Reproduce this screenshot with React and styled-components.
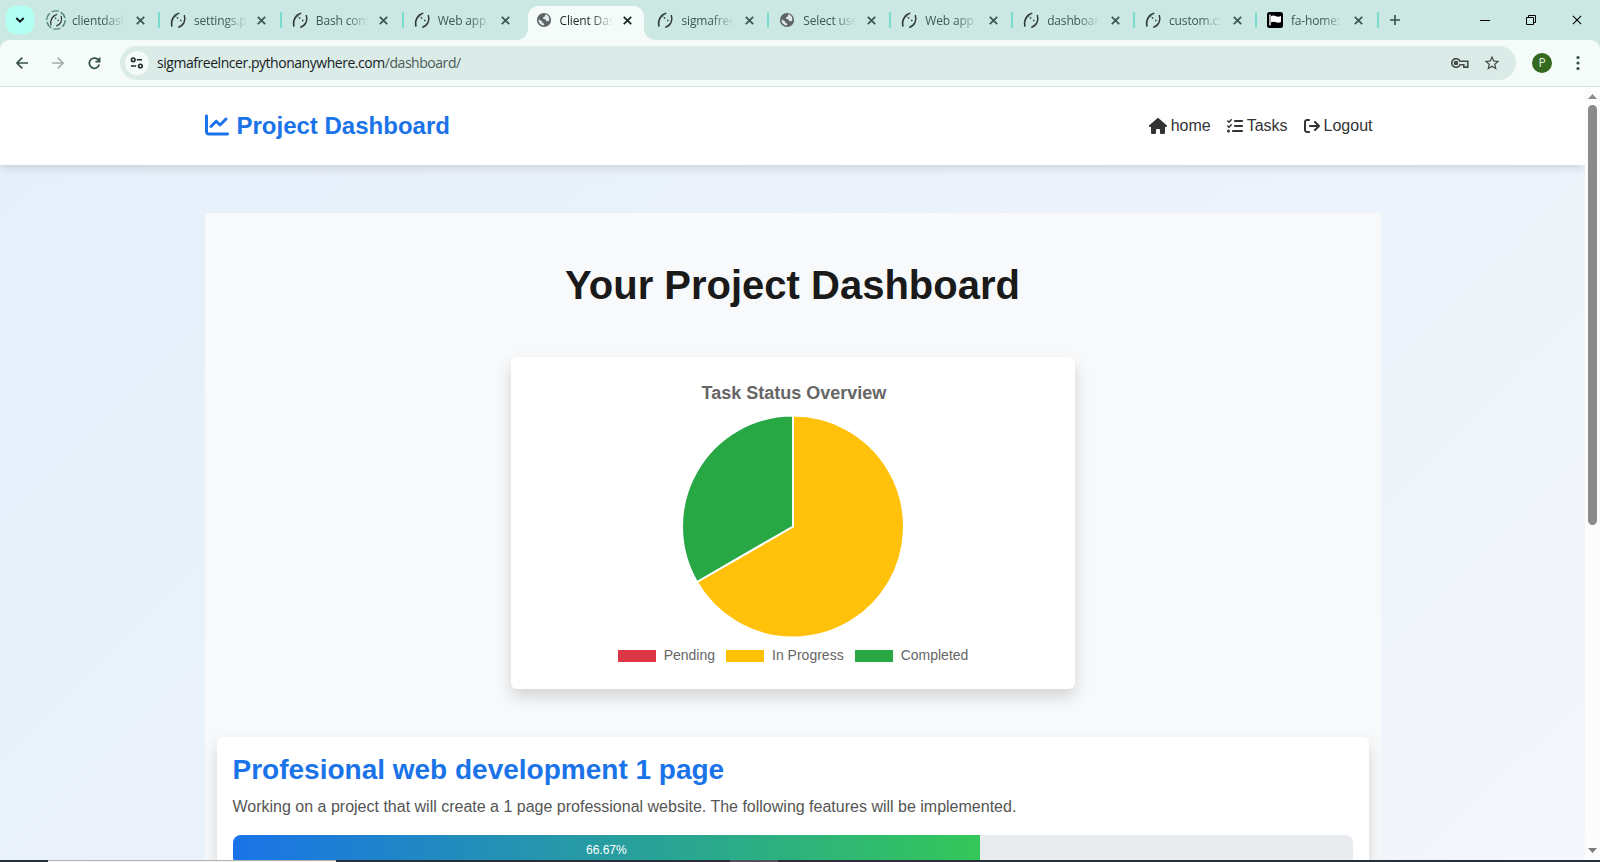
import React from "react";
import styled, { createGlobalStyle, css } from "styled-components";
import { MdOutlineStarBorder } from "react-icons/md";
import { FaChartLine, FaHouse, FaListCheck, FaArrowRightFromBracket } from "react-icons/fa6";

const GlobalStyle = createGlobalStyle`
  * { box-sizing: border-box; }
  body { margin: 0; overflow: hidden; font-family: "Liberation Sans", Arial, sans-serif; }
  h1, h2, p { margin: 0; }
  svg { display: block; flex: none; }
`;

const uiFont = css`font-family: "Open Sans", "Noto Sans", sans-serif;`;

const Window = styled.div`
  width: 1600px;
  height: 862px;
  display: flex;
  flex-direction: column;
  overflow: hidden;
  background: #cce8e2;
`;

/* Tab strip */
const TabStrip = styled.div`
  height: 40px;
  flex: none;
  display: flex;
  align-items: center;
  padding-left: 6px;
  ${uiFont}
`;
const TabSearch = styled.div`
  width: 28px;
  height: 28px;
  margin-right: 4px;
  border-radius: 9px;
  background: #b2fff3;
  display: grid;
  place-items: center;
`;
const Tab = styled.div`
  position: relative;
  width: 121.9px;
  height: 40px;
  padding-left: 8px;
  display: flex;
  align-items: center;
  font-size: 12px;
  color: ${(p) => (p.$active ? "#1c2b28" : "#3c5a54")};
  > * { position: relative; }
`;
const TabShape = styled.div`
  && { position: absolute; }
  left: 2px;
  top: 6px;
  width: 116px;
  height: 34px;
  border-radius: 10px 10px 0 0;
  background: #f4fbf9;
  &::before, &::after {
    content: "";
    position: absolute;
    bottom: 0;
    width: 11px;
    height: 11px;
  }
  &::before { left: -11px; background: radial-gradient(circle at 0 0, transparent 10.5px, #f4fbf9 11px); }
  &::after { right: -11px; background: radial-gradient(circle at 100% 0, transparent 10.5px, #f4fbf9 11px); }
`;
const Favicon = styled.div`
  width: 20px;
  height: 20px;
  display: grid;
  place-items: center;
  color: #5f6368;
`;
const TabTitle = styled.div`
  width: 53px;
  margin-left: 6px;
  padding-top: 1px;
  overflow: hidden;
  white-space: nowrap;
  line-height: 20px;
  letter-spacing: -0.15px;
  mask-image: linear-gradient(90deg, #000 58%, transparent 100%);
`;
const TabClose = styled.div`
  width: 16px;
  height: 16px;
  margin-left: 7px;
  display: grid;
  place-items: center;
`;
const Separator = styled.div`
  && { position: absolute; }
  right: 0;
  top: 12px;
  width: 2px;
  height: 16px;
  background: #78dcce;
`;
const NewTab = styled.div`
  width: 32px;
  display: grid;
  place-items: center;
`;
const WindowButtons = styled.div`
  margin-left: auto;
  display: flex;
`;
const WindowButton = styled.div`
  width: 46px;
  height: 40px;
  display: grid;
  place-items: center;
`;

/* Toolbar */
const Toolbar = styled.div`
  height: 47px;
  flex: none;
  display: flex;
  align-items: center;
  padding: 0 4px;
  background: #f4fbf9;
  border-bottom: 1px solid #d8e6e3;
  border-radius: 9px 9px 0 0;
  color: #33504a;
`;
const ToolButton = styled.div`
  width: 36px;
  height: 36px;
  display: grid;
  place-items: center;
  color: ${(p) => (p.$muted ? "#a3b0ad" : "inherit")};
`;
const Omnibox = styled.div`
  flex: 1;
  height: 34px;
  margin: 0 6px 0 8px;
  padding: 0 8px 0 5px;
  display: flex;
  align-items: center;
  border-radius: 17px;
  background: #dbece8;
`;
const SiteInfo = styled.div`
  width: 24px;
  height: 24px;
  margin-right: 8px;
  border-radius: 50%;
  background: #f4fbf9;
  display: grid;
  place-items: center;
`;
const Url = styled.div`
  flex: 1;
  ${uiFont}
  font-size: 14px;
  letter-spacing: -0.46px;
  line-height: 20px;
  color: #18211f;
  span { color: #4a5b57; }
`;
const OmniAction = styled.div`
  width: 32px;
  display: grid;
  place-items: center;
  color: #444c4a;
`;
const Avatar = styled.div`
  width: 20px;
  height: 20px;
  margin: 0 8px 0 10px;
  border-radius: 50%;
  background: #33691e;
  color: #e6f0e0;
  ${uiFont}
  font-size: 12px;
  line-height: 20px;
  text-align: center;
`;

/* Web page */
const Viewport = styled.div`
  height: 773px;
  flex: none;
  display: flex;
  overflow: hidden;
`;
const Page = styled.div`
  width: 1585px;
  height: 773px;
  overflow: hidden;
  background: linear-gradient(135deg, #e5effa 0%, #edf3fb 65%, #f3f7fb 100%);
`;
const SiteHeader = styled.header`
  position: relative;
  height: 78px;
  padding: 0 212.5px 0 204.5px;
  display: flex;
  align-items: center;
  justify-content: space-between;
  background: #fff;
  box-shadow: 0 2px 10px rgba(0, 0, 0, 0.15);
`;
const Brand = styled.div`
  display: flex;
  align-items: center;
  gap: 8px;
  color: #1a73e8;
  font-size: 24px;
  font-weight: 700;
  line-height: 28px;
  svg { margin-top: -2px; }
`;
const Nav = styled.nav`
  display: flex;
  gap: 16px;
`;
const NavLink = styled.div`
  display: flex;
  align-items: center;
  gap: 4px;
  color: #333;
  font-size: 16px;
  line-height: 18px;
  svg { margin-top: -1px; }
`;
const Main = styled.main`
  width: 1176px;
  height: 700px;
  margin: 48px 0 0 205px;
  padding: 48px 12px 0;
  display: flex;
  flex-direction: column;
  align-items: center;
  background: #f8f9fb;
`;
const Heading = styled.h1`
  margin-right: 1px;
  font-size: 40px;
  line-height: 48px;
  color: #1a1a1a;
`;
const ChartCard = styled.section`
  width: 564px;
  height: 332px;
  flex: none;
  margin-top: 48px;
  padding-top: 25px;
  display: flex;
  flex-direction: column;
  align-items: center;
  background: #fff;
  border-radius: 6px;
  box-shadow: 0 8px 16px rgba(0, 0, 0, 0.15);
  color: #666;
`;
const ChartTitle = styled.div`
  margin: 0 0 12px 2px;
  font-size: 18px;
  font-weight: 700;
  line-height: 22px;
`;
const Legend = styled.div`
  margin-top: 9px;
  display: flex;
  gap: 11px;
`;
const LegendItem = styled.div`
  display: flex;
  align-items: center;
  gap: 8px;
  font-size: 14px;
  line-height: 17px;
`;
const Swatch = styled.div`
  width: 38px;
  height: 12px;
  background: ${(p) => p.$color};
`;
const ProjectCard = styled.section`
  width: 1152px;
  height: 300px;
  flex: none;
  margin-top: 48px;
  padding: 16px;
  background: #fff;
  border-radius: 6px;
  box-shadow: 0 8px 16px rgba(0, 0, 0, 0.15);
`;
const ProjectTitle = styled.h2`
  margin-left: -0.5px;
  font-size: 28px;
  line-height: 34px;
  color: #1a73e8;
`;
const Description = styled.p`
  margin: 8px 0 0 -0.5px;
  font-size: 16px;
  line-height: 24px;
  color: #555;
`;
const Track = styled.div`
  height: 30px;
  margin-top: 16px;
  overflow: hidden;
  border-radius: 8px;
  background: #e9ecef;
`;
const Fill = styled.div`
  height: 100%;
  background: linear-gradient(90deg, #1a73e8, #34c759);
  color: #fff;
  font-size: 12px;
  line-height: 30px;
  text-align: center;
`;

const Scrollbar = styled.div`
  width: 15px;
  padding: 7px 0 7px;
  display: flex;
  flex-direction: column;
  align-items: center;
  background: #fcfcfc;
`;
const Thumb = styled.div`
  width: 9px;
  height: 420px;
  margin: 6px 0 auto;
  border-radius: 5px;
  background: #8b8b8b;
`;

/* Sliver of the desktop taskbar */
const Taskbar = styled.div`
  height: 2px;
  flex: none;
  display: flex;
  background: #25303a;
`;
const SearchBox = styled.div`
  width: 288px;
  margin-left: 48px;
  background: #f2f2f2;
  border-top: 1px solid #b5b5b5;
`;
const ActiveApp = styled.div`
  width: 48px;
  margin-left: 394px;
  background: #4b545c;
`;

const Cross = ({ size = 9, w = 1.8 }) => (
  <svg width={size} height={size} viewBox="0 0 9 9" fill="none" stroke="currentColor" strokeWidth={w}>
    <path d="M.8.8l7.4 7.4M8.2.8L.8 8.2" />
  </svg>
);
const Snake = ({ loading }) => (
  <svg width="20" height="20" viewBox="0 0 20 20" fill="none" stroke="#30383a">
    {loading && <circle cx="10" cy="10" r="9.2" stroke="#55857a" strokeWidth="1.3" strokeDasharray="7.5 2.1" />}
    <g transform={loading ? "translate(1.8 1.8) scale(.82)" : undefined}>
      <path d="M3.9 16.6C2.400 10.500 5.600 4.400 11.300 3.200" strokeWidth="1.5" />
      <path d="M4.800 9.500C6 7.300 7.600 6.200 9.300 5.500" strokeWidth=".6" />
      <path d="M16.300 5C18 10.500 15.600 16 10.300 17.400" strokeWidth="1.5" />
      <path d="M15.200 13C14 14.800 12.600 15.900 10.800 16.500" strokeWidth=".6" />
      <path d="M8.800 7.900h1.500M12 10.500h1.500" strokeWidth="1.500" />
    </g>
  </svg>
);
const Globe = () => (
  <svg width="16" height="16" viewBox="0 0 16 16">
    <circle cx="8" cy="8" r="7.100" fill="#5f6368" />
    <path d="M9.200 2.300L9 4.300 7.200 5.200 7 6.700 9.600 7.600 10.300 9.300 12.200 9.200 13.300 8.200A5.500 5.500 0 0 0 9.200 2.300zM2.600 7.200L6.200 9.400 6.400 11 8 11.600 8.300 13.400A5.500 5.500 0 0 1 2.600 7.200z" fill="#dfebe8" />
  </svg>
);
const Flag = () => (
  <svg width="16" height="16" viewBox="0 0 16 16">
    <rect width="16" height="16" rx="2.5" fill="#000" />
    <path d="M2.3 2.5h1.4v11H2.3zM4 4.2c2-1 3.5-.6 5 0s3 .6 5-.2v6c-2 .9-3.500.8-5 .2s-3-.7-5 .1z" fill="#fff" />
  </svg>
);
const Pie = () => (
  <svg width="222" height="222" viewBox="-111 -110.500 222 222" stroke="#fff" strokeWidth="2" strokeLinejoin="bevel">
    <path d="M0 0V-111A111 111 0 1 1 -96.13 55.5Z" fill="#ffc10a" />
    <path d="M0 0L-96.13 55.5A111 111 0 0 1 0-111Z" fill="#28a745" />
  </svg>
);

const tabs = [
  { title: "clientdashboard", icon: "loading" },
  { title: "settings.py", icon: "snake" },
  { title: "Bash console", icon: "snake" },
  { title: "Web app setup", icon: "snake" },
  { title: "Client Dashboard", icon: "globe", active: true },
  { title: "sigmafreelncer", icon: "snake" },
  { title: "Select user", icon: "globe" },
  { title: "Web app setup", icon: "snake" },
  { title: "dashboard", icon: "snake" },
  { title: "custom.css", icon: "snake" },
  { title: "fa-home: Font", icon: "flag" },
];
const icons = {
  loading: <Snake loading />,
  snake: <Snake />,
  globe: <Globe />,
  flag: <Flag />,
};
const legend = [
  ["Pending", "#dc3545"],
  ["In Progress", "#ffc107"],
  ["Completed", "#28a745"],
];
const progress = 66.67;

export default function App() {
  return (
    <Window>
      <GlobalStyle />
      <TabStrip>
        <TabSearch>
          <svg width="10" height="6" viewBox="0 0 10 6" fill="none" stroke="#10201c" strokeWidth="2">
            <path d="M1.3 1L5 4.600L8.700 1" />
          </svg>
        </TabSearch>
        {tabs.map((t, i) => (
          <Tab key={i} $active={t.active}>
            {t.active && <TabShape />}
            <Favicon>{icons[t.icon]}</Favicon>
            <TabTitle>{t.title}</TabTitle>
            <TabClose><Cross /></TabClose>
            {!t.active && !tabs[i + 1]?.active && <Separator />}
          </Tab>
        ))}
        <NewTab>
          <svg width="10" height="10" viewBox="0 0 10 10" stroke="#33504a" strokeWidth="1.6"><path d="M5 0v10M0 5h10" /></svg>
        </NewTab>
        <WindowButtons>
          <WindowButton><svg width="10" height="1" viewBox="0 0 10 1"><path d="M0 0h10v1H0z" /></svg></WindowButton>
          <WindowButton>
            <svg width="10" height="10" viewBox="0 0 10 10" fill="none" stroke="#000"><path d="M.5 2.500h7v7h-7zM2.500 2.500v-2h7v7h-2" /></svg>
          </WindowButton>
          <WindowButton><Cross size={10} w={1} /></WindowButton>
        </WindowButtons>
      </TabStrip>
      <Toolbar>
        <ToolButton>
          <svg width="12" height="12" viewBox="0 0 12 12" fill="none" stroke="currentColor" strokeWidth="1.6"><path d="M12 6H1M6.300.6L.9 6l5.400 5.400" /></svg>
        </ToolButton>
        <ToolButton $muted>
          <svg width="12" height="12" viewBox="0 0 12 12" fill="none" stroke="currentColor" strokeWidth="1.6"><path d="M0 6h11M5.700.6L11.100 6l-5.400 5.400" /></svg>
        </ToolButton>
        <ToolButton>
          <svg width="13" height="13" viewBox="0 0 13 13" fill="none" stroke="currentColor" strokeWidth="1.7"><path d="M11 4A5.100 5.100 0 1 0 11.300 7.600M11.600.5v4.100H7.400" /></svg>
        </ToolButton>
        <Omnibox>
          <SiteInfo>
            <svg width="14" height="12" viewBox="0 0 14 12" fill="none" stroke="#222b29" strokeWidth="1.6">
              <circle cx="3.200" cy="2.800" r="1.800" /><path d="M6.800 2.800H12M1 9h5.200" /><circle cx="10.400" cy="9" r="1.800" />
            </svg>
          </SiteInfo>
          <Url>sigmafreelncer.pythonanywhere.com<span>/dashboard/</span></Url>
          <OmniAction>
            <svg width="18" height="10" viewBox="0 0 18 10" fill="none" stroke="currentColor" strokeWidth="1.6">
              <path d="M9 3.300A4.300 4.300 0 1 0 9 6.700h3.800v2.400h4V3.300z" /><circle cx="5" cy="5" r="1.500" fill="currentColor" />
            </svg>
          </OmniAction>
          <OmniAction><MdOutlineStarBorder size={18} /></OmniAction>
        </Omnibox>
        <Avatar>P</Avatar>
        <ToolButton>
          <svg width="4" height="16" viewBox="0 0 4 16" fill="currentColor"><circle cx="2" cy="2.500" r="1.600" /><circle cx="2" cy="8" r="1.600" /><circle cx="2" cy="13.500" r="1.600" /></svg>
        </ToolButton>
      </Toolbar>
      <Viewport>
        <Page>
          <SiteHeader>
            <Brand><FaChartLine size={24} />Project Dashboard</Brand>
            <Nav>
              <NavLink><FaHouse size={18} />home</NavLink>
              <NavLink><FaListCheck size={16} />Tasks</NavLink>
              <NavLink><FaArrowRightFromBracket size={16} />Logout</NavLink>
            </Nav>
          </SiteHeader>
          <Main>
            <Heading>Your Project Dashboard</Heading>
            <ChartCard>
              <ChartTitle>Task Status Overview</ChartTitle>
              <Pie />
              <Legend>
                {legend.map(([label, color]) => (
                  <LegendItem key={label}><Swatch $color={color} />{label}</LegendItem>
                ))}
              </Legend>
            </ChartCard>
            <ProjectCard>
              <ProjectTitle>Profesional web development 1 page</ProjectTitle>
              <Description>Working on a project that will create a 1 page professional website. The following features will be implemented.</Description>
              <Track><Fill style={{ width: `${progress}%` }}>{progress}%</Fill></Track>
            </ProjectCard>
          </Main>
        </Page>
        <Scrollbar>
          <svg width="9" height="5" viewBox="0 0 9 5" fill="#8b8b8b"><path d="M0 5L4.500 0L9 5z" /></svg>
          <Thumb />
          <svg width="9" height="5" viewBox="0 0 9 5" fill="#7b7b7b"><path d="M0 0L4.500 5L9 0z" /></svg>
        </Scrollbar>
      </Viewport>
      <Taskbar><SearchBox /><ActiveApp /></Taskbar>
    </Window>
  );
}
